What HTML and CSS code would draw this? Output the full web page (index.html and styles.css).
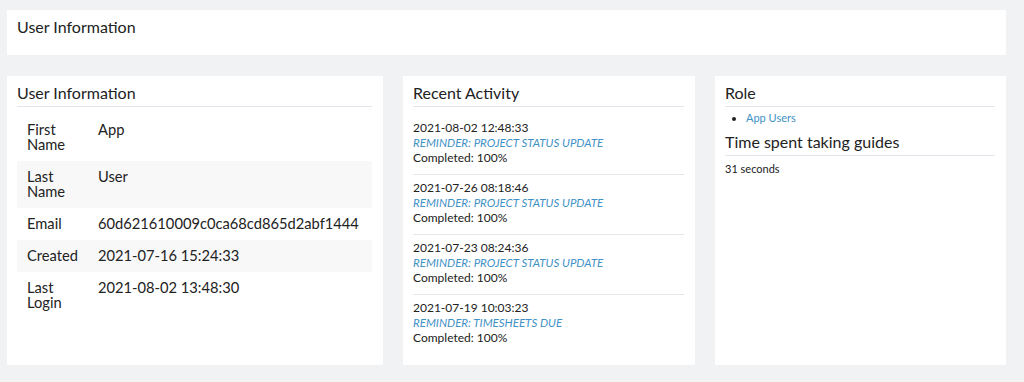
FILE: index.html
```html
<!DOCTYPE html>
<html>
<head>
<meta charset="utf-8">
<link rel="stylesheet" href="styles.css">
</head>
<body>
<div class="page">
  <div class="top-card">
    <h1 class="page-title">User Information</h1>
  </div>
  <div class="row">
    <section class="card">
      <h2 class="card-title">User Information</h2>
      <table class="info-table">
        <tr><td class="label">First Name</td><td class="value">App</td></tr>
        <tr class="alt"><td class="label">Last Name</td><td class="value">User</td></tr>
        <tr><td class="label">Email</td><td class="value">60d621610009c0ca68cd865d2abf1444</td></tr>
        <tr class="alt"><td class="label">Created</td><td class="value">2021-07-16 15:24:33</td></tr>
        <tr><td class="label">Last Login</td><td class="value">2021-08-02 13:48:30</td></tr>
      </table>
    </section>
    <section class="card">
      <h2 class="card-title">Recent Activity</h2>
      <ul class="activity">
        <li class="activity-item">
          <div>2021-08-02 12:48:33</div>
          <a class="guide" href="#">REMINDER: PROJECT STATUS UPDATE</a>
          <div>Completed: 100%</div>
        </li>
        <li class="activity-item">
          <div>2021-07-26 08:18:46</div>
          <a class="guide" href="#">REMINDER: PROJECT STATUS UPDATE</a>
          <div>Completed: 100%</div>
        </li>
        <li class="activity-item">
          <div>2021-07-23 08:24:36</div>
          <a class="guide" href="#">REMINDER: PROJECT STATUS UPDATE</a>
          <div>Completed: 100%</div>
        </li>
        <li class="activity-item">
          <div>2021-07-19 10:03:23</div>
          <a class="guide" href="#">REMINDER: TIMESHEETS DUE</a>
          <div>Completed: 100%</div>
        </li>
      </ul>
    </section>
    <section class="card">
      <h2 class="card-title">Role</h2>
      <ul class="roles">
        <li><a class="role-link" href="#">App Users</a></li>
      </ul>
      <h2 class="card-title second">Time spent taking guides</h2>
      <p class="small-text">31 seconds</p>
    </section>
  </div>
</div>
</body>
</html>
```
FILE: styles.css
```css
html, body {
  margin: 0;
  padding: 0;
  background: #f1f2f4;
}
body {
  font-family: Lato, "Open Sans", sans-serif;
  color: #222;
}
.page {
  padding: 10px 18px 0 7px;
}
.top-card {
  background: #fff;
  padding: 7px 10px 18px;
  margin-bottom: 21px;
}
.page-title {
  margin: 0;
  font-size: 16px;
  line-height: 20px;
  font-weight: 400;
}
.row {
  display: grid;
  grid-template-columns: 376px 292px 1fr;
  gap: 20px;
}
.card {
  background: #fff;
  padding: 7px 11px 11px 10px;
}
.card-title {
  margin: 0;
  font-size: 16px;
  line-height: 20px;
  font-weight: 400;
  padding-bottom: 3px;
  border-bottom: 1px solid #e1e4ea;
}
.card-title.second {
  margin-top: 7px;
}
.info-table {
  width: 100%;
  border-collapse: collapse;
  margin-top: 7px;
  font-size: 14.7px;
  line-height: 15px;
}
.info-table td {
  padding: 8px 10px 9px;
  vertical-align: top;
}
.info-table .label {
  width: 20%;
  padding-right: 10px;
}
.info-table tr.alt td {
  background: #f8f8f9;
}
.activity {
  list-style: none;
  margin: 8px 0 0;
  padding: 0;
  font-size: 12px;
  line-height: 15px;
}
.activity-item {
  padding: 5px 0 9px;
}
.activity-item + .activity-item {
  border-top: 1px solid #e4e6eb;
}
.guide {
  display: block;
  color: #3f91c6;
  font-size: 11.5px;
  font-style: italic;
  text-decoration: none;
}
.roles {
  margin: 3px 0 0;
  padding-left: 21px;
  font-size: 11px;
  line-height: 15px;
}
.role-link {
  color: #3f91c6;
  text-decoration: none;
}
.small-text {
  margin: 5px 0 0;
  font-size: 11px;
  line-height: 15px;
}
```
